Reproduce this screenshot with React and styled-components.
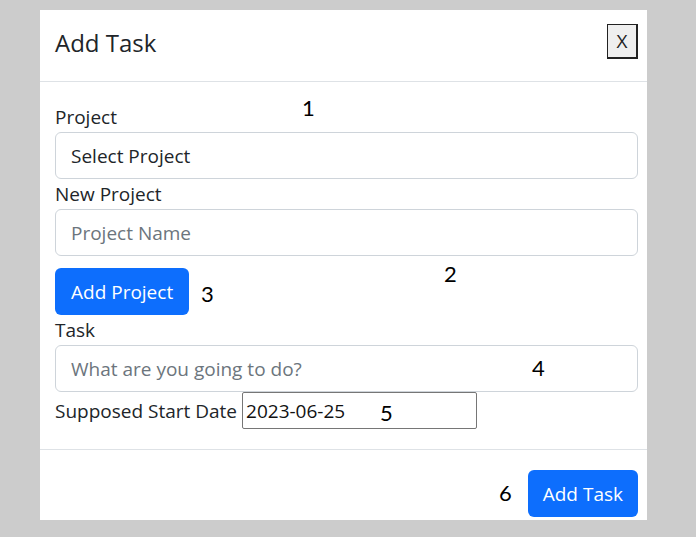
import React from "react";
import styled, { createGlobalStyle } from "styled-components";

const GlobalStyle = createGlobalStyle`
  html, body {
    margin: 0;
    padding: 0;
    background: #cccccc;
    font-family: "Open Sans", "Noto Sans", sans-serif;
    color: #212529;
  }
  * {
    box-sizing: border-box;
  }
`;

const markers = [
  { n: 1, x: 262, y: 87 },
  { n: 2, x: 404, y: 253 },
  { n: 3, x: 161, y: 273 },
  { n: 4, x: 492, y: 347 },
  { n: 5, x: 340, y: 392 },
  { n: 6, x: 459, y: 472 },
];

const App = () => {
  return (
    <>
      <GlobalStyle />
      <Modal>
        <Header>
          <Title>Add Task</Title>
          <CloseButton>X</CloseButton>
        </Header>
        <Body>
          <Label>Project</Label>
          <Field value="Select Project" readOnly />
          <Label>New Project</Label>
          <Field placeholder="Project Name" />
          <PrimaryButton $top={12} $pad={16}>
            Add Project
          </PrimaryButton>
          <Label>Task</Label>
          <Field placeholder="What are you going to do?" />
          <DateRow>
            <span>Supposed Start Date</span>
            <DateInput value="2023-06-25" readOnly />
          </DateRow>
        </Body>
        <Footer>
          <PrimaryButton $pad={15}>Add Task</PrimaryButton>
        </Footer>
        {markers.map((m) => (
          <Marker key={m.n} $x={m.x} $y={m.y}>
            {m.n}
          </Marker>
        ))}
      </Modal>
    </>
  );
};

export default App;

const Modal = styled.div`
  position: relative;
  margin: 10px 0 0 40px;
  width: 607px;
  height: 510px;
  background: #fff;
  overflow: hidden;
`;

const Header = styled.div`
  display: flex;
  align-items: flex-start;
  justify-content: space-between;
  height: 72px;
  padding: 14px 9px 0 15px;
  border-bottom: 1px solid #dee2e6;
`;

const Title = styled.h4`
  margin: 0;
  font-size: 24px;
  font-weight: 500;
  line-height: 38px;
`;

const CloseButton = styled.button`
  width: 31px;
  height: 35px;
  padding: 0;
  background: #efefef;
  border-style: solid;
  border-color: #222;
  border-width: 1px 2px 2px 1px;
  font-family: "Open Sans", sans-serif;
  font-size: 19px;
  color: #222;
`;

const Body = styled.div`
  display: flex;
  flex-direction: column;
  align-items: flex-start;
  padding: 20px 9px 20px 15px;
  font-size: 19px;
`;

const Label = styled.label`
  display: block;
  line-height: 30px;
`;

const Field = styled.input`
  width: 100%;
  height: 47px;
  padding: 0 15px;
  border: 1px solid #ced4da;
  border-radius: 6px;
  font-family: "Open Sans", sans-serif;
  font-size: 19px;
  color: #212529;
  outline: none;
  &::placeholder {
    color: #6c757d;
  }
`;

const PrimaryButton = styled.button`
  margin-top: ${(p) => p.$top || 0}px;
  height: 47px;
  padding: 0 ${(p) => p.$pad}px;
  border: none;
  border-radius: 6px;
  background: #0d6efd;
  color: #fff;
  font-family: "Open Sans", sans-serif;
  font-size: 19px;
`;

const DateRow = styled.div`
  display: flex;
  align-items: center;
  gap: 5px;
  height: 37px;
`;

const DateInput = styled.input`
  width: 235px;
  height: 37px;
  padding: 0 3px;
  border: 1px solid #767676;
  border-radius: 2px;
  font-family: "Open Sans", sans-serif;
  font-size: 19px;
  color: #111;
  outline: none;
`;

const Footer = styled.div`
  display: flex;
  justify-content: flex-end;
  padding: 20px 9px;
  border-top: 1px solid #dee2e6;
`;

const Marker = styled.span`
  position: absolute;
  left: ${(p) => p.$x}px;
  top: ${(p) => p.$y}px;
  font-family: Lato, sans-serif;
  font-size: 22px;
  line-height: 1;
  color: #000;
`;
